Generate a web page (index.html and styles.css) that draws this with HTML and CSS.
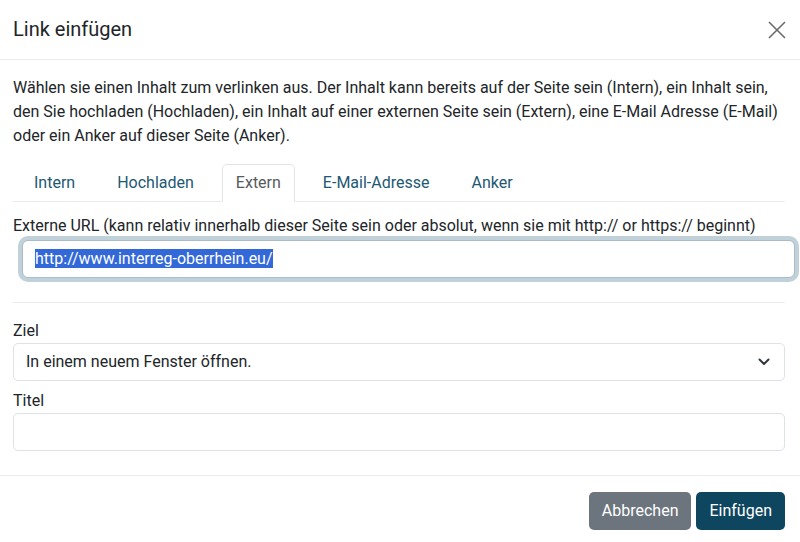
FILE: index.html
```html
<!DOCTYPE html>
<html lang="de">
<head>
<meta charset="utf-8">
<title>Link einfügen</title>
<link rel="stylesheet" href="styles.css">
</head>
<body>
<div class="modal">
  <div class="modal-header">
    <h5 class="modal-title">Link einfügen</h5>
    <button class="btn-close" aria-label="Schließen">
      <svg width="18" height="18" viewBox="0 0 18 18"><path d="M1 1L17 17M17 1L1 17" stroke="#6b6b6b" stroke-width="1.6" fill="none"/></svg>
    </button>
  </div>
  <div class="modal-body">
    <p class="intro">Wählen sie einen Inhalt zum verlinken aus. Der Inhalt kann bereits auf der Seite sein (Intern), ein Inhalt sein, den Sie hochladen (Hochladen), ein Inhalt auf einer externen Seite sein (Extern), eine E-Mail Adresse (E-Mail) oder ein Anker auf dieser Seite (Anker).</p>
    <ul class="nav-tabs">
      <li class="nav-item"><a class="nav-link">Intern</a></li>
      <li class="nav-item"><a class="nav-link">Hochladen</a></li>
      <li class="nav-item"><a class="nav-link active">Extern</a></li>
      <li class="nav-item"><a class="nav-link">E-Mail-Adresse</a></li>
      <li class="nav-item"><a class="nav-link">Anker</a></li>
    </ul>
    <label class="form-label label-url">Externe URL (kann relativ innerhalb dieser Seite sein oder absolut, wenn sie mit http:// or https:// beginnt)</label>
    <div class="form-control url-input focused"><span class="selected">http://www.interreg-oberrhein.eu/</span></div>
    <hr class="divider">
    <label class="form-label">Ziel</label>
    <div class="form-select">
      <span>In einem neuem Fenster öffnen.</span>
      <svg class="chevron" width="12" height="8" viewBox="0 0 12 8"><path d="M1.5 1.5L6 6L10.5 1.5" stroke="#343a40" stroke-width="2" fill="none" stroke-linecap="round" stroke-linejoin="round"/></svg>
    </div>
    <label class="form-label label-titel">Titel</label>
    <div class="form-control"></div>
  </div>
  <div class="modal-footer">
    <button class="btn btn-secondary">Abbrechen</button>
    <button class="btn btn-primary">Einfügen</button>
  </div>
</div>
</body>
</html>
```
FILE: styles.css
```css
* { box-sizing: border-box; }
html, body {
  margin: 0;
  padding: 0;
  background: #fff;
}
body {
  font-family: Roboto, "Liberation Sans", sans-serif;
  font-size: 16px;
  line-height: 24px;
  color: #212529;
}
.modal {
  width: 800px;
  height: 542px;
  display: flex;
  flex-direction: column;
}
.modal-header {
  display: flex;
  align-items: center;
  justify-content: space-between;
  padding: 17px 14px 17px 13px;
  border-bottom: 1px solid #e9ecef;
}
.modal-title {
  margin: 0;
  font-size: 20px;
  line-height: 25px;
  font-weight: 400;
}
.btn-close {
  border: 0;
  background: transparent;
  padding: 0;
  width: 18px;
  height: 18px;
  display: flex;
}
.modal-body {
  padding: 16px 15px 24px 13px;
  display: flex;
  flex-direction: column;
  border-bottom: 1px solid #e9ecef;
}
.intro {
  margin: 0 0 16px;
}
.nav-tabs {
  list-style: none;
  margin: 0;
  padding: 0;
  display: flex;
  border-bottom: 1px solid #e9ecef;
}
.nav-item {
  margin: 0 7px -1px;
}
.nav-link {
  display: block;
  padding: 6px 13px;
  border: 1px solid transparent;
  border-top-left-radius: 5px;
  border-top-right-radius: 5px;
  color: #1d5874;
}
.nav-link.active {
  color: #555b61;
  border-color: #e2e5e8 #e2e5e8 #fff;
  background: #fff;
}
.form-label {
  display: block;
}
.label-url {
  margin: 12px 0 2px;
}
.form-control,
.form-select {
  height: 38px;
  border: 1px solid #dee2e6;
  border-radius: 5px;
  background: #fff;
  padding: 6px 12px;
}
.url-input {
  margin: 0 -10px 0 9px;
  border-color: #a9bcc7;
  box-shadow: 0 0 0 4px #c1d1d9;
  border-radius: 6px;
}
.selected {
  background: #3368d8;
  color: #fff;
}
.divider {
  margin: 24px 0 16px;
  border: 0;
  border-top: 1px solid #e9ecef;
  height: 0;
}
.form-select {
  display: flex;
  align-items: center;
  justify-content: space-between;
  padding-right: 14px;
}
.label-titel {
  margin-top: 8px;
}
.modal-footer {
  display: flex;
  justify-content: flex-end;
  gap: 5px;
  padding: 16px 15px 14px;
}
.btn {
  font-family: inherit;
  font-size: 16px;
  line-height: 24px;
  padding: 6px 12px;
  border: 1px solid transparent;
  border-radius: 5px;
  color: #fff;
}
.btn-secondary {
  background: #6c757d;
}
.btn-primary {
  background: #0e4660;
}
```
